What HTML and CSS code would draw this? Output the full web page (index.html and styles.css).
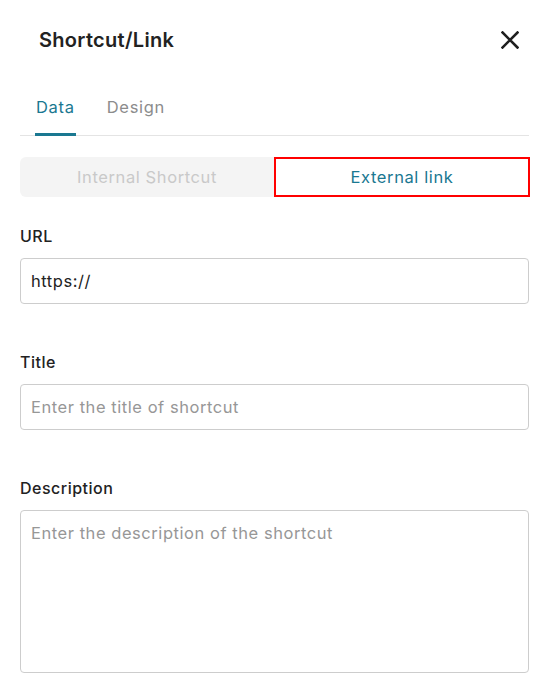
FILE: index.html
```html
<!DOCTYPE html>
<html lang="en">
<head>
<meta charset="utf-8">
<title>Shortcut/Link</title>
<link rel="stylesheet" href="styles.css">
</head>
<body>
<div class="panel">
  <header class="header">
    <h1 class="title">Shortcut/Link</h1>
    <button class="close" aria-label="Close">
      <svg width="18" height="18" viewBox="0 0 18 18"><path d="M1.5 1.5 L16.5 16.5 M16.5 1.5 L1.5 16.5" stroke="#1f1f1f" stroke-width="2.6" stroke-linecap="square" fill="none"/></svg>
    </button>
  </header>
  <nav class="tabs">
    <span class="tab active">Data</span>
    <span class="tab">Design</span>
  </nav>
  <div class="segmented">
    <span class="seg">Internal Shortcut</span>
    <span class="seg active">External link</span>
  </div>
  <div class="field first">
    <label class="label">URL</label>
    <div class="input value">https://</div>
  </div>
  <div class="field">
    <label class="label">Title</label>
    <div class="input placeholder">Enter the title of shortcut</div>
  </div>
  <div class="field">
    <label class="label">Description</label>
    <div class="input textarea placeholder">Enter the description of the shortcut</div>
  </div>
</div>
</body>
</html>
```
FILE: styles.css
```css
* { box-sizing: border-box; }
html, body { margin: 0; padding: 0; background: #fff; }
body {
  font-family: Inter, "Open Sans", sans-serif;
  color: #222;
  width: 548px;
  height: 690px;
  overflow: hidden;
}
.panel { padding: 0 19px 0 20px; }
.header {
  display: flex;
  align-items: center;
  justify-content: space-between;
  padding: 28px 10px 0 19px;
  height: 52px;
}
.title {
  margin: 0;
  font-size: 20px;
  line-height: 24px;
  font-weight: 600;
  color: #222;
  letter-spacing: 0.3px;
}
.close {
  border: 0;
  background: none;
  padding: 0;
  width: 18px;
  height: 18px;
  display: flex;
}
.tabs {
  display: flex;
  gap: 30px;
  margin-top: 43px;
  padding-left: 15px;
  border-bottom: 1px solid #e4e4e4;
}
.tab {
  font-size: 16.5px;
  line-height: 24px;
  letter-spacing: 0.7px;
  color: #8c8c8c;
  padding: 0 1px 14px;
  border-bottom: 3px solid transparent;
  margin-bottom: -1px;
}
.tab.active {
  color: #1a7891;
  border-bottom-color: #1a7891;
}
.segmented {
  margin-top: 21px;
  display: grid;
  grid-template-columns: 254px 1fr;
  background: #f4f4f4;
  border-radius: 6px;
  height: 40px;
}
.seg {
  display: flex;
  align-items: center;
  justify-content: center;
  font-size: 16.5px;
  letter-spacing: 0.6px;
  color: #c9c9c9;
}
.seg.active {
  background: #fff;
  color: #1a7891;
  border: 2px solid #ff0000;
  margin-right: -1px;
}
.field { margin-top: 46px; }
.field.first { margin-top: 27px; }
.label {
  display: block;
  font-size: 16px;
  line-height: 24px;
  font-weight: 500;
  letter-spacing: 0.5px;
  color: #222;
  margin-bottom: 10px;
}
.input {
  height: 46px;
  border: 1px solid #cdcdcd;
  border-radius: 4px;
  padding: 0 10px;
  display: flex;
  align-items: center;
  font-size: 16.5px;
  letter-spacing: 0.55px;
}
.value { color: #222; }
.placeholder { color: #979797; }
.textarea {
  height: 163px;
  align-items: flex-start;
  padding-top: 12px;
}
```
